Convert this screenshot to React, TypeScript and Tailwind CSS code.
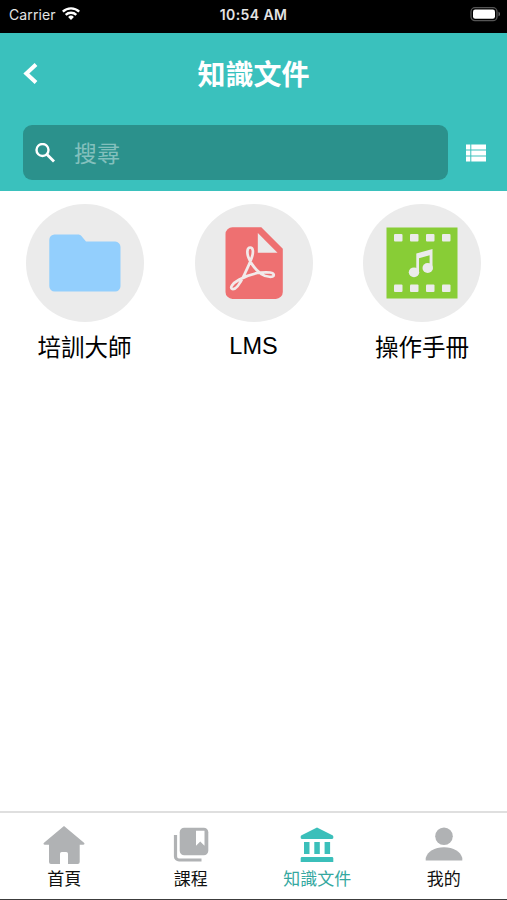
import React from "react";

const FolderIcon = () => (
  <svg width="72" height="58" viewBox="0 0 72 58" fill="#93cffd">
    <path d="M5.5 .5H29c1.4 0 2.5.5 3.4 1.5L37 7.6h29.2a5.3 5.3 0 0 1 5.3 5.3v39.3a5.3 5.3 0 0 1-5.3 5.3H5.6A5.3 5.3 0 0 1 .3 52.2V5.8A5.3 5.3 0 0 1 5.5.5Z" />
  </svg>
);

const PdfIcon = () => (
  <svg width="58" height="72" viewBox="0 0 58 72">
    <path d="M7.5.3h28.8L57.8 21.7v43.2a7 7 0 0 1-7 7H7.5a7 7 0 0 1-7-7V7.3a7 7 0 0 1 7-7Z" fill="#ee7071" />
    <path d="M32.8 6v19.7h19.7Z" fill="#ebebeb" />
    <path
      d="M25.2 20.5C21.800 20.500 21.800 26 23.500 30.500 26 37 31 43 36 46.800 41.500 50.300 48.800 50.800 48.800 48 48.800 45.200 43 45 36 45.500 28 46.400 22 48.300 14 52.800 7 56.700 4.500 60.800 7.300 62 11 63 15.800 55 19 48.300 22 42 25 36 26.800 30.500 28.600 25 28.300 20.500 25.200 20.500Z"
      fill="none"
      stroke="#f2eaea"
      strokeWidth="2.700"
      strokeLinejoin="round"
    />
  </svg>
);

const FilmIcon = () => (
  <svg width="72" height="72" viewBox="0 0 72 72" fill="#ebebeb">
    <path d="M.5.5h71v71H.5Z" fill="#88cd36" />
    {[8, 24, 40, 56].map((x) => (
      <g key={x}>
        <rect x={x} y="7" width="8.500" height="7.500" rx="1" />
        <rect x={x} y="57.500" width="8.500" height="7.500" rx="1" />
      </g>
    ))}
    <path d="M30.300 26.500 46.500 22v20.500h-2.900V28.300L33 31.300v14.500h-2.700Z" />
    <ellipse cx="28" cy="45.300" rx="5.200" ry="4.900" />
    <ellipse cx="41.700" cy="41" rx="5.200" ry="4.900" />
  </svg>
);

const HomeIcon = () => (
  <svg width="42" height="40" viewBox="0 0 42 40" fill="#b0b2b4">
    <path d="M21 1 41 17.700c1 .9.500 2-.8 2H36.700V37a2 2 0 0 1-2 2H25V28.800a1.800 1.800 0 0 0-1.800-1.800h-4.400a1.800 1.800 0 0 0-1.800 1.800V39H8a2 2 0 0 1-2-2V19.700H1.800c-1.300 0-1.800-1.100-.8-2Z" />
  </svg>
);

const CourseIcon = () => (
  <svg width="36" height="36" viewBox="0 0 36 36">
    <path d="M2.500 8v21.500a3.500 3.500 0 0 0 3.500 3.500H28.500" fill="none" stroke="#b0b2b4" strokeWidth="3.200" />
    <rect x="6.700" y=".8" width="28.600" height="27.500" rx="4.500" fill="#b0b2b4" />
    <path d="M23 3.700h8.500v15l-4.250-4.200L23 18.700Z" fill="#fff" />
  </svg>
);

const LibraryIcon = () => (
  <svg width="34" height="36" viewBox="0 0 34 36" fill="#3bbfba">
    <path d="M17 .4 32.400 8.200c.6.300.9.800.9 1.400v1.200c0 .7-.4 1.200-1.200 1.200H1.900C1.100 12 .7 11.500.7 10.800V9.600c0-.6.300-1.100.9-1.400Z" />
    <path d="M4 15h5.500v12H4ZM14.300 15h5.500v12h-5.500ZM24.600 15h5.500v12h-5.500ZM2 30h30a1.300 1.300 0 0 1 1.300 1.300v3.700H.7v-3.700A1.300 1.300 0 0 1 2 30Z" />
  </svg>
);

const UserIcon = () => (
  <svg width="38" height="36" viewBox="0 0 38 36" fill="#b0b2b4">
    <circle cx="19" cy="9.200" r="8.800" />
    <path d="M.7 33.500V31C2.500 24.500 9.500 20.200 19 20.200S35.500 24.500 37.300 31v2.500Z" />
  </svg>
);

const categories = [
  { name: "培訓大師", icon: <FolderIcon />, label: "mt-[8px]" },
  { name: "LMS", icon: <PdfIcon />, label: "mt-[6px]" },
  { name: "操作手冊", icon: <FilmIcon />, label: "mt-[8px]" },
];

const tabs = [
  { name: "首頁", icon: <HomeIcon /> },
  { name: "課程", icon: <CourseIcon /> },
  { name: "知識文件", icon: <LibraryIcon />, active: true },
  { name: "我的", icon: <UserIcon /> },
];

const StatusBar: React.FC = () => (
  <div className="grid h-[33px] grid-cols-3 items-center bg-black pb-[5px] font-['Inter',sans-serif] text-[#e4e4e4]">
    <div className="flex items-center pl-[9px] text-[14px]">
      <span className="w-[53px] whitespace-nowrap tracking-[0.1px]">Carrier</span>
      <svg width="18" height="14" viewBox="0 0 18 14" fill="none" stroke="#fff" strokeWidth="2.400">
        <path d="M.8 4.700a11.800 11.800 0 0 1 16.400 0M3.700 7.900a7.600 7.600 0 0 1 10.600 0" />
        <path d="m9 13-2.900-3a4.200 4.200 0 0 1 5.800 0Z" fill="#fff" stroke="none" />
      </svg>
    </div>
    <div className="text-center text-[14px] font-semibold tracking-[0.400px]">10:54 AM</div>
    <svg className="mr-[6px] justify-self-end" width="31" height="15" viewBox="0 0 31 15">
      <rect x="1" y=".7" width="26" height="13" rx="4" fill="none" stroke="#555" strokeWidth="1.300" />
      <rect x="3" y="2.500" width="22" height="9.300" rx="2.200" fill="#fff" />
      <path d="M28.500 4.700c2 .6 2 4 0 4.600Z" fill="#666" />
    </svg>
  </div>
);

const Header: React.FC = () => (
  <header className="h-[158px] bg-[#3ac1bd] pt-[18px]">
    <div className="grid h-[46px] grid-cols-3 items-center">
      <svg className="ml-[23px]" width="16" height="22" viewBox="0 0 16 22" fill="none" stroke="#fff" strokeWidth="4">
        <path d="M13 1.500 3.300 10.500l9.700 9" />
      </svg>
      <h1 className="pt-[4px] text-center text-[28px] leading-[42px] font-bold whitespace-nowrap text-white">知識文件</h1>
    </div>
    <div className="mt-[28px] flex items-center">
      <div className="ml-[23px] flex h-[55px] w-[425px] items-center rounded-[9px] bg-[#2b918c] pl-[12px]">
        <svg width="20" height="20" viewBox="0 0 20 20" fill="none" stroke="#fff" strokeWidth="2.400">
          <circle cx="7.500" cy="7" r="6" />
          <path d="m12 11.500 7 7" strokeWidth="2.900" />
        </svg>
        <span className="ml-[19px] pt-[4px] text-[23px] text-[#83c0bd]">搜尋</span>
      </div>
      <svg className="ml-[17px]" width="22" height="20" viewBox="0 0 22 20" fill="#fff">
        <path d="M1 1.500h4.300v5H1ZM6.300 1.500H21v5H6.300ZM1 7.500h4.300v5H1ZM6.300 7.500H21v5H6.300ZM1 13.500h4.300v5H1ZM6.300 13.500H21v5H6.300Z" />
      </svg>
    </div>
  </header>
);

export default function App() {
  return (
    <div className="flex h-[900px] w-[507px] flex-col overflow-hidden bg-white font-['Liberation_Sans','Noto_Sans_CJK_TC',sans-serif]">
      <StatusBar />
      <Header />

      <main className="grid flex-1 grid-cols-[169px_169px_168px] content-start pt-[13px]">
        {categories.map((item) => (
          <div key={item.name} className="flex flex-col items-center">
            <div className="flex size-[118px] items-center justify-center rounded-full bg-[#ebebeb]">{item.icon}</div>
            <span className={`${item.label} text-[23.500px] leading-[36px] text-black`}>{item.name}</span>
          </div>
        ))}
      </main>

      <nav className="grid h-[89px] grid-cols-4 border-t-2 border-b border-t-[#dfdfdf] border-b-[#3c3c3c] pt-[12px] pl-px">
        {tabs.map((tab) => (
          <div key={tab.name} className="flex flex-col items-center">
            <div className="flex h-[40px] items-center">{tab.icon}</div>
            <span className={tab.active ? "text-[17px] leading-[30px] text-[#35a89f]" : "text-[17px] leading-[30px] text-[#111]"}>
              {tab.name}
            </span>
          </div>
        ))}
      </nav>
    </div>
  );
}
